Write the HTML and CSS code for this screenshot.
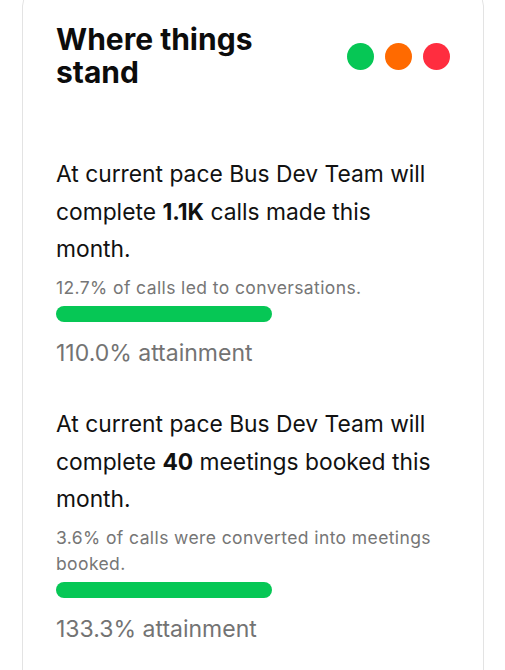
FILE: index.html
```html
<!DOCTYPE html>
<html>
<head>
<meta charset="utf-8">
<link rel="stylesheet" href="styles.css">
</head>
<body>
<div class="card">
  <div class="header">
    <h1 class="title">Where things<br>stand</h1>
    <div class="dots">
      <span class="dot green"></span>
      <span class="dot orange"></span>
      <span class="dot red"></span>
    </div>
  </div>
  <div class="stat first">
    <p class="lead">At current pace Bus Dev Team will complete <b>1.1K</b> calls made this month.</p>
    <p class="sub">12.7% of calls led to conversations.</p>
    <div class="bar"></div>
    <p class="attain">110.0% attainment</p>
  </div>
  <div class="stat second">
    <p class="lead">At current pace Bus Dev Team will complete <b>40</b> meetings booked this month.</p>
    <p class="sub">3.6% of calls were converted into meetings booked.</p>
    <div class="bar"></div>
    <p class="attain">133.3% attainment</p>
  </div>
</div>
</body>
</html>
```
FILE: styles.css
```css
html, body {
  margin: 0;
  padding: 0;
  background: #ffffff;
}
body {
  font-family: Inter, "Noto Sans", sans-serif;
  color: #111111;
  overflow: hidden;
}
.card {
  margin: -10px 21px 0 22px;
  border: 1px solid #e3e3e3;
  border-radius: 16px;
  padding: 32px 33px 40px 33px;
  height: 700px;
  box-sizing: border-box;
}
.header {
  display: flex;
  align-items: center;
  justify-content: space-between;
}
.title {
  margin: 0;
  font-size: 30px;
  line-height: 33px;
  font-weight: 700;
  color: #0c0c0c;
}
.dots {
  display: flex;
  gap: 11px;
}
.dot {
  width: 27px;
  height: 27px;
  border-radius: 50%;
  display: block;
}
.green { background: #06c755; }
.orange { background: #ff6a00; }
.red { background: #ff2d3f; }
.stat.first { margin-top: 66px; }
.stat.second { margin-top: 37px; }
.lead {
  margin: 0;
  font-size: 22.8px;
  line-height: 37.5px;
  color: #111111;
  padding-right: 10px;
}
.lead b { font-weight: 700; }
.sub {
  margin: 7.5px 0 0 0;
  font-size: 17.5px;
  letter-spacing: 0.4px;
  line-height: 26px;
  color: #767676;
}
.bar {
  margin-top: 5px;
  width: 216px;
  height: 16px;
  border-radius: 8px;
  background: #06c755;
}
.attain {
  margin: 16px 0 0 0;
  font-size: 23px;
  line-height: 30px;
  color: #737373;
}
```
